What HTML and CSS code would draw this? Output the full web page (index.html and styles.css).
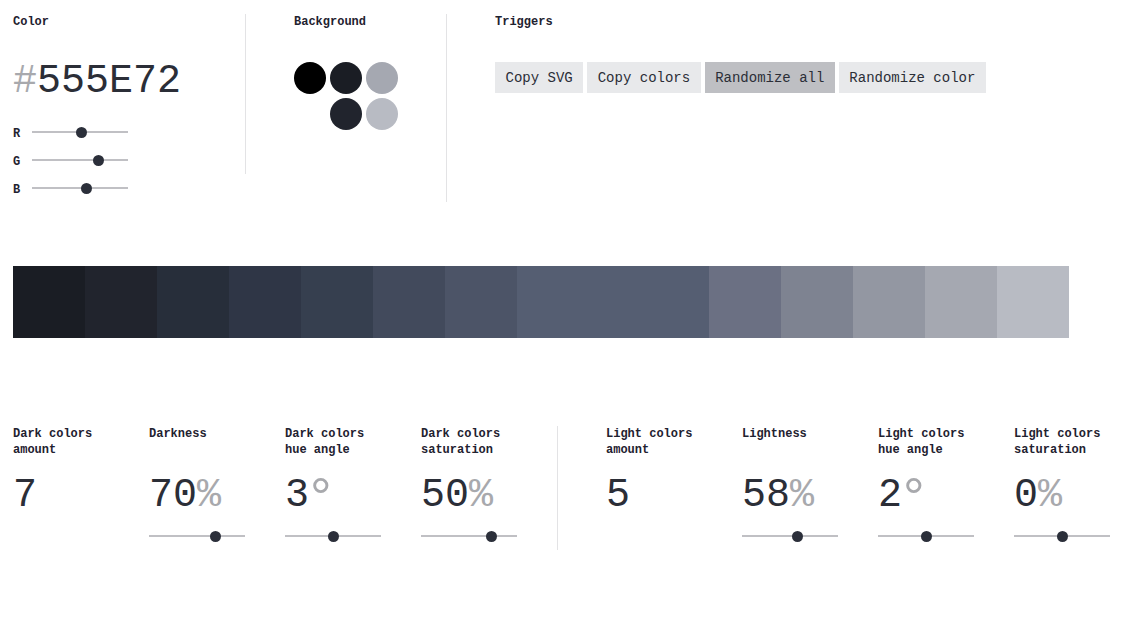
FILE: index.html
```html
<!DOCTYPE html>
<html lang="en">
<head>
<meta charset="utf-8">
<title>Palette generator</title>
<link rel="stylesheet" href="styles.css">
</head>
<body>
<div class="page">
  <section class="top">
    <div class="col col-color">
      <div class="label">Color</div>
      <div class="hex"><span class="muted">#</span>555E72</div>
      <div class="rgb">
        <div class="rgb-row"><span class="ch">R</span><div class="slider"><span class="thumb" style="left:49px"></span></div></div>
        <div class="rgb-row"><span class="ch">G</span><div class="slider"><span class="thumb" style="left:66px"></span></div></div>
        <div class="rgb-row"><span class="ch">B</span><div class="slider"><span class="thumb" style="left:54px"></span></div></div>
      </div>
    </div>
    <div class="col col-bg">
      <div class="label">Background</div>
      <div class="dots">
        <span class="dot" style="background:#000000"></span>
        <span class="dot" style="background:#1a1d24"></span>
        <span class="dot" style="background:#a5a8b1"></span>
        <span class="dot empty"></span>
        <span class="dot" style="background:#21242d"></span>
        <span class="dot" style="background:#b8bbc3"></span>
      </div>
    </div>
    <div class="col col-triggers">
      <div class="label">Triggers</div>
      <div class="buttons">
        <button class="btn">Copy SVG</button>
        <button class="btn">Copy colors</button>
        <button class="btn active">Randomize all</button>
        <button class="btn">Randomize color</button>
      </div>
    </div>
  </section>

  <div class="palette">
    <span class="sw" style="background:#1a1d24"></span>
    <span class="sw" style="background:#21242d"></span>
    <span class="sw" style="background:#272e3a"></span>
    <span class="sw" style="background:#2f3646"></span>
    <span class="sw" style="background:#363f4f"></span>
    <span class="sw" style="background:#424a5c"></span>
    <span class="sw" style="background:#4c5467"></span>
    <span class="sw base" style="background:#555e72"></span>
    <span class="sw" style="background:#6b7083"></span>
    <span class="sw" style="background:#7e8391"></span>
    <span class="sw" style="background:#9397a2"></span>
    <span class="sw" style="background:#a5a8b1"></span>
    <span class="sw" style="background:#b8bbc3"></span>
  </div>

  <section class="params">
    <div class="group">
      <div class="param">
        <div class="plabel">Dark colors<br>amount</div>
        <div class="value">7</div>
      </div>
      <div class="param">
        <div class="plabel">Darkness</div>
        <div class="value">70<span class="muted">%</span></div>
        <div class="slider"><span class="thumb" style="left:66px"></span></div>
      </div>
      <div class="param">
        <div class="plabel">Dark colors<br>hue angle</div>
        <div class="value">3<span class="muted deg">°</span></div>
        <div class="slider"><span class="thumb" style="left:48px"></span></div>
      </div>
      <div class="param">
        <div class="plabel">Dark colors<br>saturation</div>
        <div class="value">50<span class="muted">%</span></div>
        <div class="slider"><span class="thumb" style="left:70px"></span></div>
      </div>
    </div>
    <div class="group group-light">
      <div class="param">
        <div class="plabel">Light colors<br>amount</div>
        <div class="value">5</div>
      </div>
      <div class="param">
        <div class="plabel">Lightness</div>
        <div class="value">58<span class="muted">%</span></div>
        <div class="slider"><span class="thumb" style="left:55px"></span></div>
      </div>
      <div class="param">
        <div class="plabel">Light colors<br>hue angle</div>
        <div class="value">2<span class="muted deg">°</span></div>
        <div class="slider"><span class="thumb" style="left:48px"></span></div>
      </div>
      <div class="param">
        <div class="plabel">Light colors<br>saturation</div>
        <div class="value">0<span class="muted">%</span></div>
        <div class="slider"><span class="thumb" style="left:48px"></span></div>
      </div>
    </div>
  </section>
</div>
</body>
</html>
```

FILE: styles.css
```css
* { box-sizing: border-box; }

html, body {
  margin: 0;
  padding: 0;
  background: #ffffff;
}

body {
  font-family: "Liberation Mono", "DejaVu Sans Mono", monospace;
  color: #2b2e37;
}

.page {
  padding: 14px 13px;
}

.muted { color: #a8a9ad; }

.deg {
  font-family: "Liberation Sans", Arial, sans-serif;
  font-size: 54px;
  line-height: 0;
  vertical-align: -10px;
  margin-left: 1px;
}

.label,
.plabel,
.ch {
  font-size: 12px;
  line-height: 16px;
  font-weight: bold;
  color: #1f2230;
}

/* top section */
.top {
  display: flex;
  align-items: flex-start;
}

.col-color {
  width: 232px;
  padding-right: 48px;
}

.col-bg {
  height: 160px;
  border-left: 1px solid #e3e3e5;
  padding: 0 48px;
}

.col-triggers {
  height: 188px;
  border-left: 1px solid #e3e3e5;
  padding-left: 48px;
}

.hex {
  margin-top: 28px;
  font-size: 40px;
  line-height: 48px;
  white-space: nowrap;
}

.rgb {
  margin-top: 12px;
}

.rgb-row {
  display: flex;
  align-items: center;
  height: 28px;
}

.ch {
  width: 19px;
  padding-top: 3px;
}

.slider {
  position: relative;
  width: 96px;
  height: 12px;
}

.slider::before {
  content: "";
  position: absolute;
  left: 0;
  right: 0;
  top: 5px;
  height: 2px;
  background: #c0c0c4;
}

.thumb {
  position: absolute;
  top: 0.5px;
  width: 11px;
  height: 11px;
  margin-left: -5.5px;
  border-radius: 50%;
  background: #2b2f3a;
}

.dots {
  margin-top: 32px;
  display: grid;
  grid-template-columns: repeat(3, 32px);
  grid-auto-rows: 32px;
  gap: 4px;
}

.dot {
  width: 32px;
  height: 32px;
  border-radius: 50%;
}

.dot.empty { background: transparent; }

.buttons {
  margin-top: 32px;
  display: flex;
  gap: 4px;
}

.btn {
  font-family: "Liberation Mono", "DejaVu Sans Mono", monospace;
  font-size: 14px;
  line-height: 30px;
  height: 31px;
  padding: 1px 10.5px 0;
  border: 0;
  border-radius: 0;
  background: #e8e9eb;
  color: #2b2e37;
  white-space: nowrap;
}

.btn.active {
  background: #bebfc3;
}

/* palette */
.palette {
  margin-top: 64px;
  display: flex;
  height: 72px;
}

.sw {
  width: 72px;
  height: 72px;
  flex: none;
}

.sw.base {
  width: 192px;
}

/* params */
.params {
  margin-top: 88px;
  display: flex;
  align-items: flex-start;
}

.group {
  display: flex;
  gap: 40px;
  padding-right: 40px;
  height: 124px;
}

.group-light {
  border-left: 1px solid #e3e3e5;
  padding-left: 48px;
  padding-right: 0;
}

.param {
  width: 96px;
}

.plabel {
  height: 32px;
  white-space: nowrap;
}

.value {
  margin-top: 14px;
  font-size: 40px;
  line-height: 48px;
  height: 48px;
  white-space: nowrap;
}

.param .slider {
  margin-top: 10px;
}
```
